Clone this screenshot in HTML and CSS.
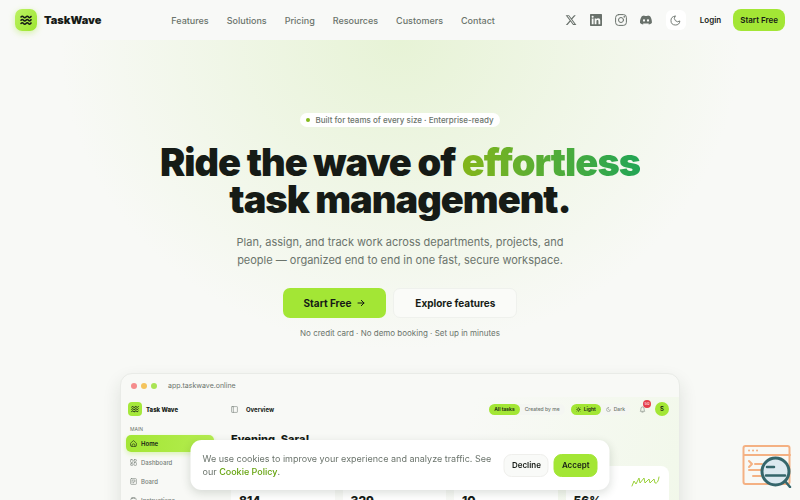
FILE: index.html
```html
<!DOCTYPE html>
<html lang="en">
<head>
<meta charset="utf-8">
<meta name="viewport" content="width=device-width, initial-scale=1">
<title>TaskWave</title>
<link rel="stylesheet" href="styles.css">
</head>
<body>
<svg class="defs" aria-hidden="true">
  <symbol id="waves" viewBox="0 0 24 24"><path d="M2 6q2.500-3 5 0t5 0 5 0 5-1M2 12.500q2.500-3 5 0t5 0 5 0 5-1M2 19q2.500-3 5 0t5 0 5 0 5-1"/></symbol>
  <symbol id="moon" viewBox="0 0 24 24"><path d="M11 2.500a7.500 7.500 0 0 0 10.500 10.500A9.700 9.700 0 1 1 11 2.500Z"/></symbol>
</svg>

<header class="topbar">
  <a class="brand" href="#"><span class="brand-mark"><svg class="line"><use href="#waves"/></svg></span>TaskWave</a>
  <nav class="links">
    <a href="#">Features</a><a href="#">Solutions</a><a href="#">Pricing</a><a href="#">Resources</a><a href="#">Customers</a><a href="#">Contact</a>
  </nav>
  <div class="actions">
    <div class="social">
      <a href="#" aria-label="X"><svg viewBox="0 0 24 24" fill="currentColor"><path d="M18.244 2.250h3.308l-7.227 8.260 8.502 11.240H16.170l-5.214-6.817L4.990 21.750H1.680l7.730-8.835L1.254 2.250H8.080l4.713 6.231zm-1.161 17.520h1.833L7.084 4.126H5.117z"/></svg></a>
      <a href="#" aria-label="LinkedIn"><svg viewBox="0 0 24 24" fill="currentColor"><path fill-rule="evenodd" d="M1.500 0h21Q24 0 24 1.500v21q0 1.500-1.500 1.500h-21Q0 24 0 22.500v-21Q0 0 1.500 0ZM3.500 9v11.500h3.600V9ZM5.300 3.300a2.100 2.100 0 1 0 0 4.200 2.100 2.100 0 0 0 0-4.200ZM9.300 9v11.500h3.600v-6c0-1.700.6-2.700 2-2.700s2 1 2 2.700v6h3.600v-6.800c0-3.400-1.600-5-4.200-5-1.700 0-2.800.8-3.500 1.900V9Z"/></svg></a>
      <a href="#" aria-label="Instagram"><svg class="line" viewBox="0 0 24 24"><rect x="1.200" y="1.200" width="21.600" height="21.600" rx="6"/><circle cx="12" cy="12" r="5"/><circle cx="18.200" cy="5.800" r=".5"/></svg></a>
      <a href="#" aria-label="Discord"><svg viewBox="0 0 24 24" fill="currentColor"><path d="M20.317 4.370a19.800 19.800 0 0 0-4.885-1.515c-.25.400-.45.850-.64 1.250a18.300 18.300 0 0 0-5.580 0c-.2-.45-.4-.85-.65-1.250A19.700 19.700 0 0 0 3.677 4.370C.533 9.046-.32 13.580.1 18.058a19.900 19.900 0 0 0 5.993 3.030c.48-.65.900-1.300 1.300-2.050-.7-.25-1.350-.55-1.900-.9l.4-.3c3.930 1.800 8.180 1.800 12.060 0l.4.300c-.6.350-1.200.65-1.900.9.350.7.800 1.400 1.250 2.050a19.800 19.800 0 0 0 6-3.030c.5-5.177-.838-9.674-3.548-13.660ZM8.020 15.330c-1.180 0-2.160-1.080-2.160-2.420s.96-2.420 2.160-2.420 2.180 1.100 2.160 2.420c0 1.340-.96 2.420-2.160 2.420Zm7.970 0c-1.180 0-2.150-1.080-2.150-2.420s.95-2.420 2.150-2.420 2.180 1.100 2.160 2.420c0 1.340-.95 2.420-2.160 2.420Z"/></svg></a>
    </div>
    <button class="theme" type="button" aria-label="Toggle theme"><svg class="line"><use href="#moon"/></svg></button>
    <a class="login" href="#">Login</a>
    <a class="cta" href="#">Start Free</a>
  </div>
</header>

<main class="hero">
  <p class="pill"><span class="pill-dot"></span>Built for teams of every size · Enterprise-ready</p>
  <h1>Ride the wave of <span class="accent">effortless</span><br>task management.</h1>
  <p class="lead">Plan, assign, and track work across departments, projects, and people — organized end to end in one fast, secure workspace.</p>
  <div class="hero-actions">
    <a class="btn primary" href="#">Start Free <svg class="line" viewBox="0 0 24 24"><path d="M3 12h18M13 4l8 8-8 8"/></svg></a>
    <a class="btn secondary" href="#">Explore features</a>
  </div>
  <p class="note">No credit card · No demo booking · Set up in minutes</p>

  <section class="window" aria-label="Product preview">
    <div class="window-bar"><i class="red"></i><i class="amber"></i><i class="green"></i><span>app.taskwave.online</span></div>
    <div class="app">
      <aside class="side">
        <div class="side-brand"><span class="side-mark"><svg class="line"><use href="#waves"/></svg></span>Task Wave</div>
        <p class="side-title">MAIN</p>
        <ul>
          <li class="active"><svg class="line" viewBox="0 0 24 24"><path d="M2 11 12 2l10 9v8q0 3-3 3H5q-3 0-3-3ZM7 22v-4a5 5 0 0 1 10 0v4"/></svg>Home</li>
          <li><svg class="line" viewBox="0 0 24 24"><rect x="2" y="2" width="8" height="10" rx="2"/><rect x="14" y="2" width="8" height="6" rx="2"/><rect x="14" y="12" width="8" height="10" rx="2"/><rect x="2" y="16" width="8" height="6" rx="2"/></svg>Dashboard</li>
          <li><svg class="line" viewBox="0 0 24 24"><rect x="2" y="2" width="20" height="20" rx="3"/><path d="M7 17V7h10v6h-5v4"/></svg>Board</li>
          <li><svg class="line" viewBox="0 0 24 24"><rect x="3" y="4" width="18" height="18" rx="3"/><path d="M8 5V2h8v3M8 12h8M8 17h8"/></svg>Instructions</li>
        </ul>
      </aside>
      <div class="content">
        <div class="app-bar">
          <svg class="line panel" viewBox="0 0 24 24"><rect x="2" y="2" width="20" height="20" rx="2"/><path d="M8 2v20"/></svg>
          <b>Overview</b>
          <div class="segment first"><span class="on">All tasks</span><span>Created by me</span></div>
          <div class="segment"><span class="on"><svg class="line" viewBox="0 0 24 24"><circle cx="12" cy="12" r="5"/><path d="M12 1v3M12 20v3M1 12h3M20 12h3M4 4l2 2M18 18l2 2M4 20l2-2M18 6l2-2"/></svg>Light</span><span><svg class="line"><use href="#moon"/></svg>Dark</span></div>
          <span class="bell"><svg class="line" viewBox="0 0 24 24"><path d="M5 17c2-3 1-6 2-9a5 5 0 0 1 10 0c1 3 0 6 2 9ZM10 21h4"/></svg><em>50</em></span>
          <span class="avatar">S</span>
        </div>
        <h2>Evening, Sara!</h2>
        <div class="stats">
          <div class="stat">814</div>
          <div class="stat">329</div>
          <div class="stat">10</div>
          <div class="stat">56%<svg class="spark line" viewBox="0 0 30 12"><path d="M1 11 3 6l2 3 3-6 1 5 4-5 1 5 4-4 1 4 4-4 1 4q3 1 4-6"/></svg></div>
        </div>
      </div>
    </div>
  </section>
</main>

<div class="cookies" role="region" aria-label="Cookie consent">
  <p>We use cookies to improve your experience and analyze traffic. See our <a href="#">Cookie Policy</a>.</p>
  <button class="decline" type="button">Decline</button>
  <button class="accept" type="button">Accept</button>
</div>

<svg class="inspector" viewBox="0 0 50 44" aria-hidden="true">
  <g fill="none" stroke="#f4b183" stroke-width="2" stroke-linecap="round" stroke-linejoin="round">
    <rect x="1.500" y="2" width="46" height="38" rx="2"/><path d="M2 11h46M7 6.500h.1M11 6.500h.1M15 6.500h.1M7 17l3 3-3 3M13 20h7M7 26h12M11 32h8"/>
  </g>
  <circle cx="33.500" cy="27.500" r="13.500" fill="#dce9f0" stroke="#35666b" stroke-width="3"/>
  <path d="M25 23h7M24 31.500h19M43 37l5 6" fill="none" stroke="#35666b" stroke-width="2.500" stroke-linecap="round"/>
</svg>
</body>
</html>
```
FILE: styles.css
```css
* { box-sizing: border-box; }
html { scrollbar-width: none; }
body {
  margin: 0;
  background: #f8f9f6;
  color: #161b16;
  font-family: Inter, "Liberation Sans", sans-serif;
  font-size: 9px;
}
a { color: inherit; text-decoration: none; }
p, h1, h2, ul { margin: 0; padding: 0; }
ul { list-style: none; }
button { font: inherit; color: inherit; padding: 0; }
.defs { position: absolute; width: 0; height: 0; }
.line { fill: none; stroke: currentColor; stroke-width: 2; stroke-linecap: round; stroke-linejoin: round; }

.topbar {
  position: sticky;
  top: 0;
  z-index: 2;
  height: 40px;
  padding: 0 15px;
  display: flex;
  align-items: center;
  justify-content: space-between;
  background: #f8f9f7;
}
.brand { display: flex; align-items: center; gap: 7px; font-size: 11px; font-weight: 900; }
.brand-mark {
  width: 22px;
  height: 22px;
  display: grid;
  place-items: center;
  border-radius: 7px;
  background: linear-gradient(135deg, #bdf264, #9be52d);
  box-shadow: 0 2px 6px #a3e63566;
}
.brand-mark svg { width: 12px; height: 12px; stroke-width: 3; }
.links { display: flex; gap: 18px; color: #6b746c; font-weight: 500; }
.actions { display: flex; align-items: center; }
.social { display: flex; gap: 13px; color: #69716b; }
.social a { display: flex; }
.social svg { width: 12px; height: 12px; }
.theme {
  width: 20px;
  height: 20px;
  margin: 0 14px;
  display: grid;
  place-items: center;
  border: 0;
  border-radius: 6px;
  background: #fff;
  color: #69716b;
}
.theme svg { width: 11px; height: 11px; }
.login, .cta { font-size: 8px; font-weight: 600; }
.cta { margin-left: 12px; padding: 0 7px; line-height: 22px; border-radius: 8px; background: #a3e635; }

.hero {
  display: flex;
  flex-direction: column;
  align-items: center;
  padding: 73px 24px 0;
  text-align: center;
  background: radial-gradient(340px 310px at 50% 0, #e7f3d6, #f8f9f600);
}
.pill {
  display: flex;
  align-items: center;
  gap: 5px;
  padding: 0 6px;
  line-height: 14px;
  font-size: 8px;
  font-weight: 500;
  color: #6b746c;
  background: #fff;
  border-radius: 7px;
}
.pill-dot { width: 4px; height: 4px; border-radius: 50%; background: #84b91c; }
h1 { margin-top: 17px; font-size: 38px; line-height: 37px; font-weight: 900; letter-spacing: -1px; }
.accent { color: transparent; background: linear-gradient(90deg, #84b51a, #22a555); background-clip: text; -webkit-background-clip: text; }
.lead { max-width: 344px; margin-top: 15px; font-size: 11px; line-height: 18px; color: #6b746c; }
.hero-actions { display: flex; gap: 7px; margin-top: 19px; }
.btn {
  display: flex;
  align-items: center;
  gap: 6px;
  height: 30px;
  padding: 0 21px;
  border-radius: 7px;
  font-size: 10px;
  font-weight: 700;
}
.btn svg { width: 8px; height: 8px; stroke-width: 3; }
.primary { background: #a3e635; }
.secondary { background: #fafbf8; border: 1px solid #eff1ed; }
.note { margin-top: 9px; line-height: 12px; font-size: 8px; color: #6b746c; }

.window {
  width: 100%;
  max-width: 560px;
  margin-top: 34px;
  text-align: left;
  border: 1px solid #e9ebe7;
  border-radius: 12px 12px 0 0;
  background: #f8f9f6;
  box-shadow: 0 8px 18px #2030201f;
}
.window-bar { display: flex; align-items: center; gap: 4px; height: 23px; padding: 0 10px; font-size: 7px; color: #6b746c; }
.window-bar i { width: 6px; height: 6px; border-radius: 50%; }
.window-bar span { margin-left: 7px; }
.red { background: #f58c8c; }
.amber { background: #f4c45d; }
.green { background: #a9e454; }
.app { display: grid; grid-template-columns: 93px 1fr; height: 160px; font-size: 6px; }
.side { padding: 5px 0 0 5px; }
.side-brand { display: flex; align-items: center; gap: 4px; padding-left: 2px; font-weight: 800; }
.side-mark { width: 14px; height: 14px; display: grid; place-items: center; border-radius: 4px; background: #a5e83b; }
.side-mark svg { width: 8px; height: 8px; stroke-width: 3; }
.side-title { margin: 9px 0 2px 4px; font-size: 5px; line-height: 8px; color: #6b746c; }
.side li { display: flex; align-items: center; gap: 4px; height: 17px; margin-bottom: 2px; padding-left: 4px; border-radius: 5px; color: #778078; font-weight: 500; }
.side li svg { width: 7px; height: 7px; }
.side .active { color: #161b16; font-weight: 600; background: linear-gradient(90deg, #a3e635, #b5ed50); box-shadow: 0 2px 5px #a3e63555; }
.content { padding: 0 10px 0 17px; background: linear-gradient(110deg, #f8f9f600 50%, #f1f8e9); }
.app-bar { display: flex; align-items: center; height: 24px; }
.app-bar b { margin-left: 8px; margin-right: auto; font-weight: 700; }
.panel { width: 7px; height: 7px; color: #778078; }
.segment { display: flex; font-size: 5px; font-weight: 500; color: #6b746c; background: #f4f6f2; border-radius: 6px; }
.segment.first { margin-right: 6px; }
.segment span { display: flex; align-items: center; gap: 3px; height: 11px; padding: 0 5px; border-radius: 6px; }
.segment svg { width: 5px; height: 5px; }
.segment .on { color: #161b16; background: #a3e635; font-weight: 600; }
.bell { position: relative; display: flex; margin: 0 9px 0 9px; color: #778078; }
.bell svg { width: 7px; height: 7px; }
.bell em { position: absolute; left: 4px; bottom: 5px; width: 8px; height: 8px; border-radius: 50%; background: #e53e4a; color: #fff; font-size: 4px; font-style: normal; line-height: 8px; text-align: center; }
.avatar { width: 14px; height: 14px; border-radius: 50%; background: #a3e635; font-weight: 600; line-height: 14px; text-align: center; }
h2 { margin-top: 11px; line-height: 15px; font-size: 11px; font-weight: 800; }
.stats { display: grid; grid-template-columns: repeat(4, 1fr); gap: 8px; margin-top: 19px; }
.stat { position: relative; height: 70px; padding: 28px 8px 0; border-radius: 8px; background: #fff; font-size: 12px; line-height: 14px; font-weight: 800; }
.spark { position: absolute; right: 8px; top: 9px; width: 30px; height: 12px; color: #9bd13b; stroke-width: 1; }

.cookies {
  position: fixed;
  z-index: 3;
  left: 50%;
  bottom: 10px;
  transform: translateX(-50%);
  width: 419px;
  max-width: calc(100% - 20px);
  display: flex;
  align-items: center;
  gap: 5px;
  padding: 12px;
  border-radius: 11px;
  background: #fff;
  box-shadow: 0 3px 10px #20302029;
}
.cookies p { flex: 1; margin-right: 6px; line-height: 13px; color: #6b746c; }
.cookies a { color: #65a30d; font-weight: 500; }
.cookies button { height: 23px; padding: 0 7px; border: 1px solid #efefec; border-radius: 8px; font-size: 8px; font-weight: 600; }
.decline { background: #f9faf8; }
.cookies .accept { background: #a3e635; border-color: #a3e635; }
.inspector { position: fixed; z-index: 3; right: 8px; bottom: 12px; width: 50px; height: 44px; }
```
